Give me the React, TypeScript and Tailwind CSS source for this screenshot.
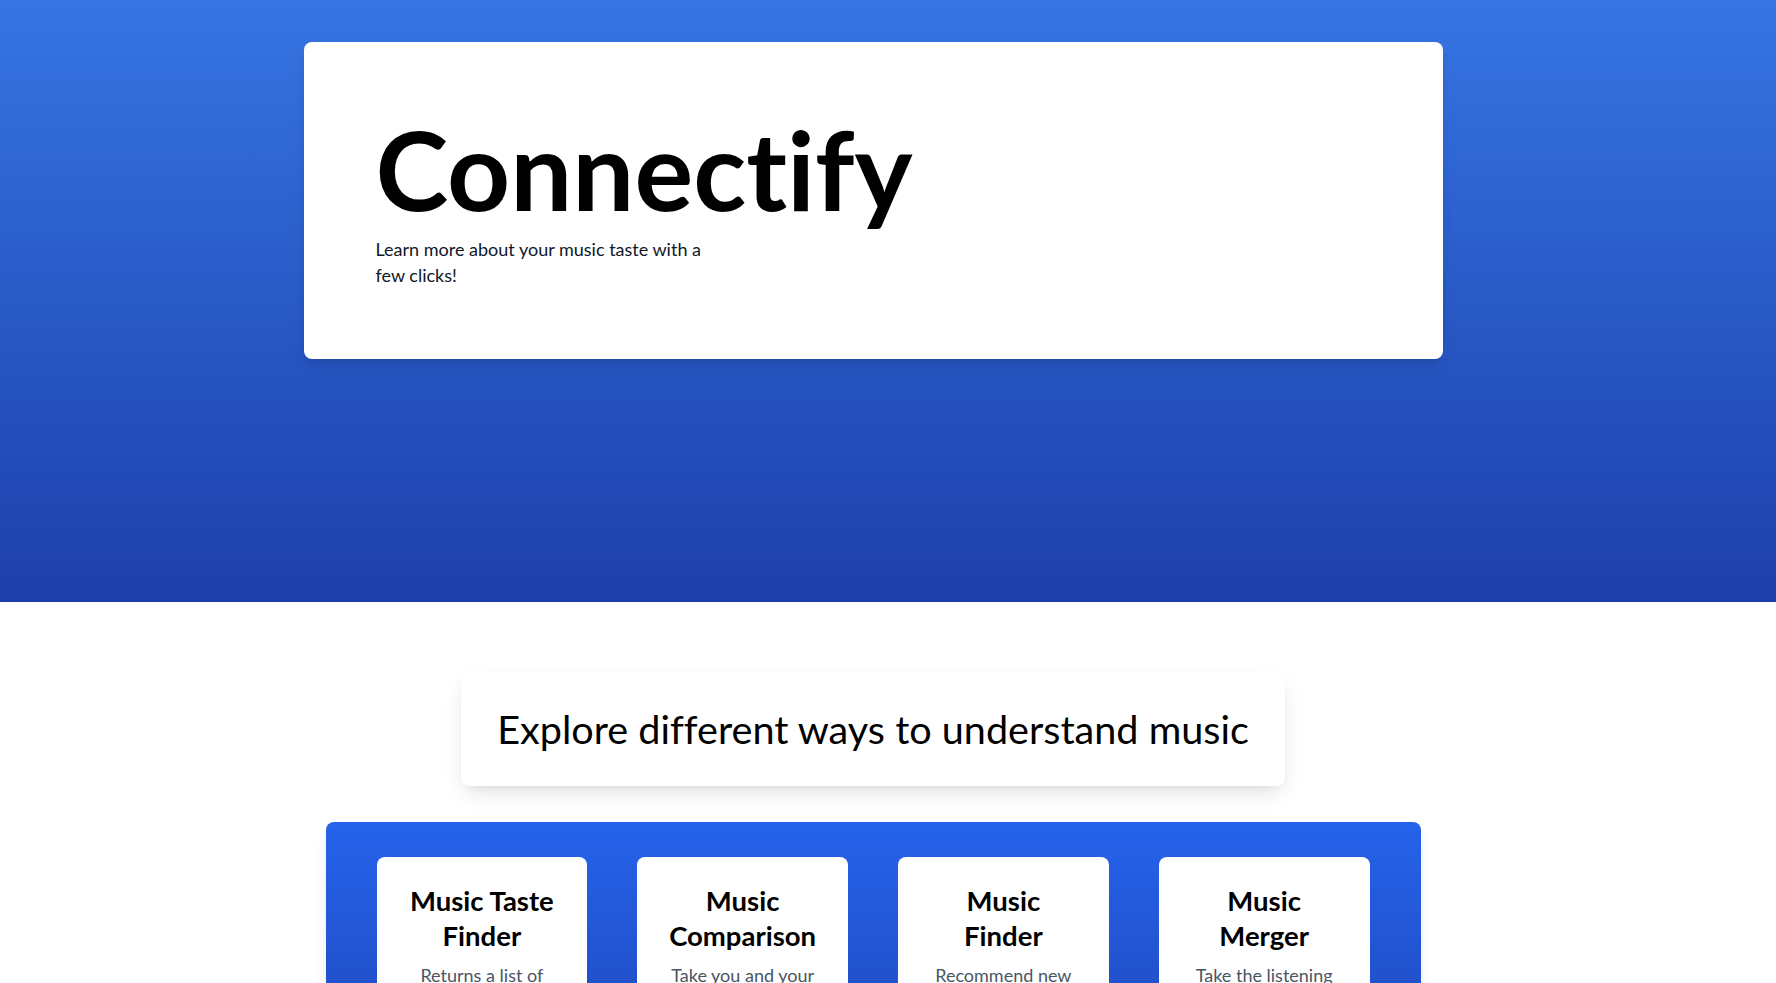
const tools = [
  {
    title: "Music Taste Finder",
    blurb: "Returns a list of artists and genres that define your taste.",
  },
  {
    title: "Music Comparison",
    blurb: "Take you and your friend's music taste and see how they compare.",
  },
  {
    title: "Music Finder",
    blurb: "Recommend new tracks based on what you already love.",
  },
  {
    title: "Music Merger",
    blurb: "Take the listening history of two people and blend it into a playlist.",
  },
];

function ToolCard({ title, blurb }: { title: string; blurb: string }) {
  return (
    <div className="flex flex-col items-center rounded-lg bg-white px-[29px] pb-8 pt-[26px] text-center">
      <h3 className="text-[27.5px] font-bold leading-[35px] text-black">{title}</h3>
      <p className="mt-[9px] text-[18px] leading-[26px] text-gray-600">{blurb}</p>
    </div>
  );
}

export default function App() {
  return (
    <div className="min-h-screen bg-white font-['Lato',sans-serif] text-black [font-variant-ligatures:none]">
      <header className="h-[602px] bg-gradient-to-b from-[#3675e3] to-[#1e3fab] pt-[42px]">
        <div className="flex justify-center pr-[30px]">
          <div className="h-[317px] w-[1139px] rounded-lg bg-white pl-[72px] pt-[71px] shadow-lg">
            <h1 className="text-[110px] font-bold leading-none">Connectify</h1>
            <p className="mt-[13px] w-[345px] text-[18px] leading-[26px] text-gray-900">
              Learn more about your music taste with a few clicks!
            </p>
          </div>
        </div>
      </header>

      <section className="flex flex-col items-center pb-16 pr-[30px] pt-[70px]">
        <div className="rounded-lg bg-white px-[36px] py-[27px] shadow-[0_10px_25px_-5px_rgba(0,0,0,0.12),0_4px_10px_-4px_rgba(0,0,0,0.08)]">
          <h2 className="text-[39.6px] leading-[60px]">Explore different ways to understand music</h2>
        </div>

        <div className="mt-9 w-[1095px] rounded-lg bg-gradient-to-b from-[#2563eb] to-[#1e40af] px-[51px] pb-12 pt-[35px] shadow-lg">
          <div className="grid grid-cols-4 gap-[50px]">
            {tools.map((tool) => (
              <ToolCard key={tool.title} title={tool.title} blurb={tool.blurb} />
            ))}
          </div>
        </div>
      </section>
    </div>
  );
}
